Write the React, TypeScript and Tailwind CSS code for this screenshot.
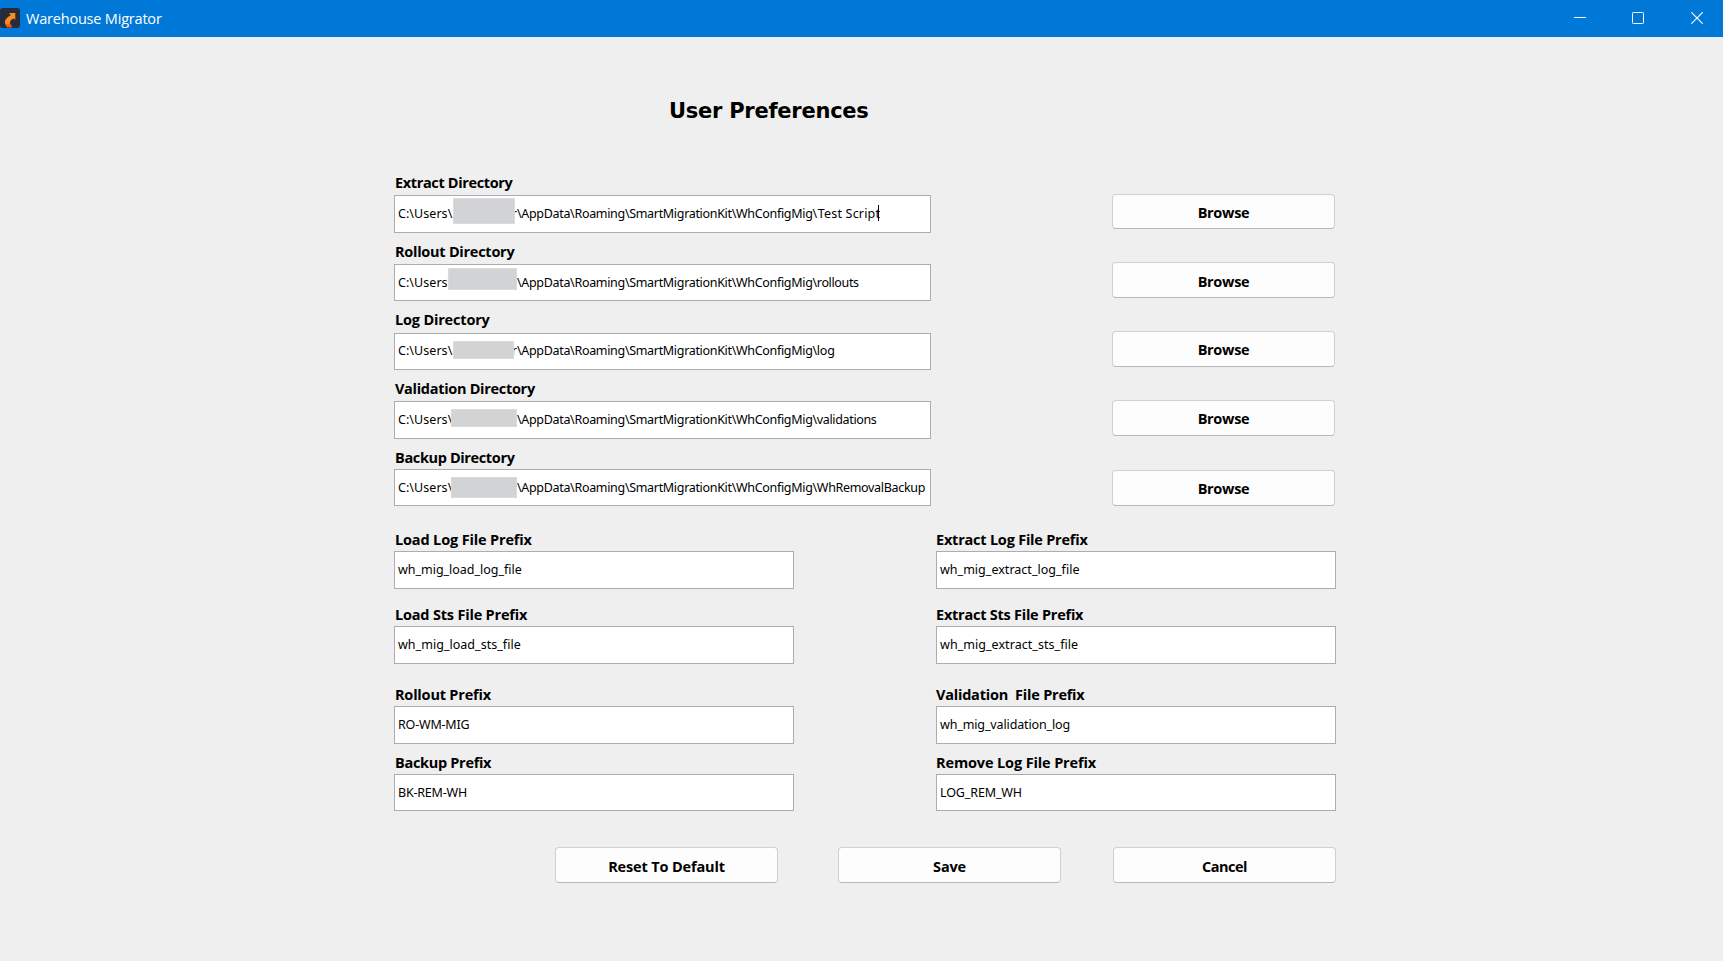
import React from "react";

type Directory = {
  label: string;
  labelClass: string;
  boxClass: string;
  maskClass: string;
  folder: string;
  folderClass: string;
  peek?: boolean;
  caret?: boolean;
  browseClass: string;
};

type Prefix = {
  label: string;
  labelClass: string;
  value: string;
  valueClass: string;
  boxClass: string;
};

const basePath = "\\AppData\\Roaming\\SmartMigrationKit\\WhConfigMig\\";

const directories: Directory[] = [
  {
    label: "Extract Directory",
    labelClass: "h-[23px] tracking-[-0.36px]",
    boxClass: "h-[38px] pt-[9px]",
    maskClass: "left-[58px] top-[2px] h-[26px] w-[62px]",
    folder: "Test Script",
    folderClass: "pl-px tracking-[0.18px]",
    peek: true,
    caret: true,
    browseClass: "h-[35px] pt-[8px]",
  },
  {
    label: "Rollout Directory",
    labelClass: "h-[23px] tracking-[-0.26px]",
    boxClass: "h-[37px] pt-[9px]",
    maskClass: "left-[53px] top-[3px] h-[22px] w-[69px]",
    folder: "rollouts",
    folderClass: "tracking-[-0.35px]",
    browseClass: "mt-[33px] h-[36px] pt-[9px]",
  },
  {
    label: "Log Directory",
    labelClass: "h-[24px] tracking-[-0.18px]",
    boxClass: "h-[37px] pt-[8px]",
    maskClass: "left-[58px] top-[7px] h-[18px] w-[61px]",
    folder: "log",
    folderClass: "tracking-[-0.2px]",
    peek: true,
    browseClass: "mt-[33px] h-[36px] pt-[8px]",
  },
  {
    label: "Validation Directory",
    labelClass: "h-[23px] tracking-[-0.3px]",
    boxClass: "h-[38px] pt-[9px]",
    maskClass: "left-[56px] top-[7px] h-[18px] w-[66px]",
    folder: "validations",
    folderClass: "tracking-[-0.35px]",
    browseClass: "mt-[33px] h-[36px] pt-[8px]",
  },
  {
    label: "Backup Directory",
    labelClass: "h-[22px] tracking-[-0.36px]",
    boxClass: "h-[37px] pt-[9px]",
    maskClass: "left-[56px] top-[7px] h-[21px] w-[66px]",
    folder: "WhRemovalBackup",
    folderClass: "tracking-[-0.32px]",
    browseClass: "mt-[34px] h-[36px] pt-[8px]",
  },
];

const leftPrefixes: Prefix[] = [
  { label: "Load Log File Prefix", labelClass: "tracking-[-0.15px]", value: "wh_mig_load_log_file", valueClass: "tracking-[-0.02px]", boxClass: "h-[38px]" },
  { label: "Load Sts File Prefix", labelClass: "mt-[15px] tracking-[-0.19px]", value: "wh_mig_load_sts_file", valueClass: "tracking-[0.03px]", boxClass: "h-[38px]" },
  { label: "Rollout Prefix", labelClass: "mt-[20px] tracking-[-0.2px]", value: "RO-WM-MIG", valueClass: "tracking-[-0.2px]", boxClass: "h-[38px]" },
  { label: "Backup Prefix", labelClass: "mt-[8px] tracking-[-0.3px]", value: "BK-REM-WH", valueClass: "tracking-[-0.2px]", boxClass: "h-[37px]" },
];

const rightPrefixes: Prefix[] = [
  { label: "Extract Log File Prefix", labelClass: "tracking-[-0.22px]", value: "wh_mig_extract_log_file", valueClass: "tracking-[0.02px]", boxClass: "h-[38px]" },
  { label: "Extract Sts File Prefix", labelClass: "mt-[15px] tracking-[-0.24px]", value: "wh_mig_extract_sts_file", valueClass: "tracking-[0.05px]", boxClass: "h-[38px]" },
  { label: "Validation  File Prefix", labelClass: "mt-[20px] tracking-[-0.22px]", value: "wh_mig_validation_log", valueClass: "tracking-[-0.13px]", boxClass: "h-[38px]" },
  { label: "Remove Log File Prefix", labelClass: "mt-[8px] tracking-[-0.13px]", value: "LOG_REM_WH", valueClass: "tracking-[-0.12px]", boxClass: "h-[37px]" },
];

const labelBase = "block whitespace-pre pt-px text-[14.5px] font-bold leading-5";
const boxBase =
  "flex items-start border border-[#abadb3] bg-white pl-[3px] font-['Noto_Sans',sans-serif] text-[12.5px] leading-[17px] whitespace-pre text-black";
const buttonBase =
  "flex w-[223px] shrink-0 items-start justify-center rounded-[4px] border border-[#d0d0d0] border-b-[#b8b8b8] bg-[#fdfdfd] text-[14.5px] font-bold leading-5";

function TitleBar() {
  return (
    <header className="flex h-[37px] items-start bg-[#0078d7] text-white">
      <svg className="mt-2 h-5 w-5" viewBox="0 0 20 20" aria-hidden="true">
        <rect width="20" height="20" rx="3" fill="#262c38" />
        <path
          d="M9 5H15.3V11.8L13.6 10.4C10.8 11.6 9.4 13.4 10.2 15.8L12 19H7L5 15.4C4.4 12 6.6 9.4 10.8 7.2Z"
          fill="#ff8a1f"
        />
        <path d="M5 15L7 19.4H12L9.9 15.6L8 17Z" fill="#f4501e" />
      </svg>
      <h1 className="ml-[6px] mt-[9px] text-[14.5px] leading-5 tracking-[-0.2px]">Warehouse Migrator</h1>
      <div className="ml-auto mr-5 mt-3 flex gap-[46px]">
        <svg className="h-3 w-3" viewBox="0 0 12 12" aria-hidden="true">
          <path d="M0 5.5H12" stroke="white" fill="none" />
        </svg>
        <svg className="h-3 w-3" viewBox="0 0 12 12" aria-hidden="true">
          <rect x="0.5" y="0.5" width="11" height="11" rx="0.8" stroke="white" fill="none" />
        </svg>
        <svg className="ml-px h-3 w-3" viewBox="0 0 12 12" aria-hidden="true">
          <path d="M0.3 0.3L11.7 11.7M11.7 0.3L0.3 11.7" stroke="white" strokeWidth="1.2" fill="none" />
        </svg>
      </div>
    </header>
  );
}

function DirectoryField({ item }: { item: Directory }) {
  return (
    <div>
      <span className={`${labelBase} pl-px ${item.labelClass}`}>{item.label}</span>
      <div className={`relative ${boxBase} ${item.boxClass}`}>
        <span className="flex w-[119px] shrink-0 justify-between">
          <span className="tracking-[0.05px]">{"C:\\Users\\"}</span>
          {item.peek && <span>r</span>}
        </span>
        <span className="tracking-[-0.32px]">{basePath}</span>
        <span className={item.folderClass}>{item.folder}</span>
        {item.caret && <span className="-ml-[2px] h-4 w-px shrink-0 bg-black" />}
        <span className={`absolute border border-[#dadbdc] bg-[#d1d3d4] ${item.maskClass}`} />
      </div>
    </div>
  );
}

function PrefixColumn({ items, inset }: { items: Prefix[]; inset: string }) {
  return (
    <div className="w-[400px]">
      {items.map((item) => (
        <div key={item.label}>
          <span className={`${labelBase} h-[22px] ${inset} ${item.labelClass}`}>{item.label}</span>
          <div className={`${boxBase} pt-[9px] ${item.boxClass}`}>
            <span className={item.valueClass}>{item.value}</span>
          </div>
        </div>
      ))}
    </div>
  );
}

export default function App() {
  return (
    <div className="h-[961px] w-[1723px] overflow-hidden bg-[#efefef] font-['Open_Sans',sans-serif] text-black">
      <TitleBar />
      <main className="pl-[394px] pt-[59px]">
        <h2 className="pl-[275px] font-['DejaVu_Sans',sans-serif] text-[21px] font-bold leading-[30px] tracking-[-0.25px]">
          User Preferences
        </h2>

        <section className="mt-[46px] flex gap-[181px]">
          <div className="flex w-[537px] flex-col gap-2">
            {directories.map((item) => (
              <DirectoryField key={item.label} item={item} />
            ))}
          </div>
          <div className="pt-[22px]">
            {directories.map((item) => (
              <button key={item.label} className={`${buttonBase} tracking-[-0.3px] ${item.browseClass}`}>
                Browse
              </button>
            ))}
          </div>
        </section>

        <section className="mt-[23px] flex gap-[142px]">
          <PrefixColumn items={leftPrefixes} inset="pl-px" />
          <PrefixColumn items={rightPrefixes} inset="pl-0" />
        </section>

        <section className="mt-[36px] flex pl-[161px]">
          <button className={`${buttonBase} h-[36px] pt-[9px] tracking-[-0.15px]`}>Reset To Default</button>
          <button className={`${buttonBase} ml-[60px] h-[36px] pt-[9px] tracking-[-0.2px]`}>Save</button>
          <button className={`${buttonBase} ml-[52px] h-[36px] pt-[9px] tracking-[-0.5px]`}>Cancel</button>
        </section>
      </main>
    </div>
  );
}
